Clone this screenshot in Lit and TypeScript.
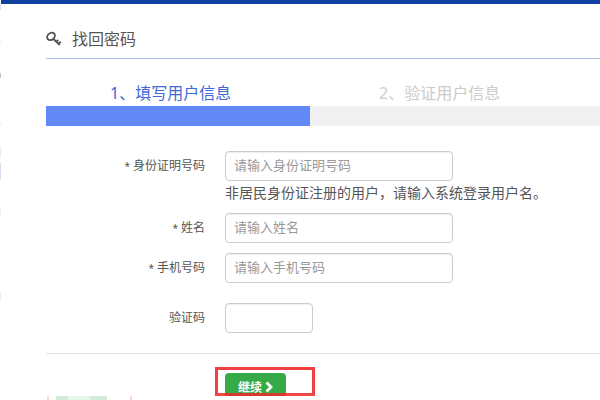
import { LitElement, html, css, nothing } from "lit";
import { customElement, property } from "lit/decorators.js";

@customElement("form-row")
class FormRow extends LitElement {
  @property() label = "";
  @property() placeholder = "";
  @property() hint = "";
  @property({ type: Boolean }) required = false;
  @property({ type: Boolean }) short = false;

  static styles = css`
    :host {
      display: grid;
      grid-template-columns: 159px minmax(0, 1fr);
      column-gap: 20px;
      color: #555;
    }
    .label {
      font-size: 12px;
      line-height: 30px;
      text-align: right;
    }
    .star {
      margin-right: 3px;
      font-size: 10px;
    }
    .input {
      display: block;
      box-sizing: border-box;
      width: 228px;
      max-width: 100%;
      height: 30px;
      padding: 0 8px 2px;
      border: 1px solid #ccc;
      border-radius: 4px;
      background: #fff;
      box-shadow: inset 0 1px 1px rgba(0, 0, 0, 0.07);
      color: #555;
      font: inherit;
      font-size: 13px;
    }
    .short {
      width: 88px;
    }
    .input::placeholder {
      color: #999;
      opacity: 1;
    }
    .hint {
      margin: 0;
      padding-top: 2px;
      font-size: 14px;
      line-height: 20px;
    }
  `;

  render() {
    return html`
      <label class="label" for="field"
        >${this.required ? html`<span class="star">*</span>` : nothing}${this.label}</label
      >
      <div>
        <input
          id="field"
          type="text"
          class="input ${this.short ? "short" : ""}"
          placeholder=${this.placeholder || nothing}
          ?required=${this.required}
        />
        ${this.hint ? html`<p class="hint">${this.hint}</p>` : nothing}
      </div>
    `;
  }
}

@customElement("app-root")
class AppRoot extends LitElement {
  static styles = css`
    :host {
      display: block;
      position: relative;
      height: 100vh;
      overflow: hidden;
      background: #fff;
      font-family: "Noto Sans", "Noto Sans CJK SC", sans-serif;
      color: #555;
    }
    .top {
      height: 4px;
      margin-left: 1px;
      background: #0f409f;
    }
    .edge {
      position: absolute;
      left: 0;
      top: 0;
      width: 1px;
      height: 100%;
      background: linear-gradient(
        #fff 4px,
        #dcdfec 4px 10px,
        #fff 10px 41px,
        #ececf2 41px 43px,
        #fff 43px 73px,
        #c4c4cc 73px 78px,
        #fff 78px 122px,
        #f2f2f5 122px 125px,
        #fff 125px 147px,
        #ececf4 147px 158px,
        #fff 158px 163px,
        #dadded 163px 180px,
        #fff 180px 207px,
        #eeeef2 207px 216px,
        #fff 216px 292px,
        #eeeef0 292px 301px,
        #fff 301px
      );
    }
    .page {
      padding-left: 46px;
    }
    .title {
      display: flex;
      align-items: center;
      gap: 10px;
      box-sizing: border-box;
      height: 55px;
      padding-top: 16px;
      border-bottom: 1px solid #a9c1e8;
    }
    .title h1 {
      margin: 0;
      font-size: 16px;
      line-height: 24px;
      font-weight: 400;
    }
    .key {
      width: 16px;
      height: 16px;
    }
    .steps {
      display: grid;
      grid-template-columns: 264px minmax(0, 1fr);
      margin: 0;
      padding: 21px 0 0;
      list-style: none;
      font-size: 16px;
      line-height: 26px;
    }
    .step {
      padding-left: 69px;
      color: #ccc;
      white-space: nowrap;
    }
    .current {
      padding-left: 64px;
      color: #4169d6;
    }
    .track {
      height: 20px;
      background: #f0f0f0;
    }
    .fill {
      width: 264px;
      height: 20px;
      background: #6188f6;
    }
    .fields {
      display: flex;
      flex-direction: column;
      gap: 10px;
      padding: 25px 0 20px;
      border-bottom: 1px solid #e2e2e2;
    }
    .code {
      margin-top: 10px;
    }
    .actions {
      position: relative;
      height: 42px;
      padding: 19px 0 0 179px;
      box-sizing: border-box;
      overflow: hidden;
    }
    .submit {
      display: flex;
      align-items: center;
      justify-content: center;
      gap: 3px;
      width: 61px;
      height: 28px;
      padding: 0;
      border: 0;
      border-radius: 4px;
      background: #35aa47;
      color: #fff;
      font: inherit;
      font-size: 12px;
      font-weight: 700;
    }
    .chevron {
      width: 8px;
      height: 12px;
    }
    .marker {
      position: absolute;
      left: 169px;
      top: 13px;
      box-sizing: border-box;
      width: 100px;
      height: 29px;
      border: 3px solid #f04040;
      border-bottom-color: rgba(240, 40, 40, 0.85);
      pointer-events: none;
    }
    .ghost {
      box-sizing: border-box;
      width: 85px;
      height: 4px;
      margin-left: 1px;
      border: solid #f9d5da;
      border-width: 0 2px;
      padding-left: 7px;
    }
    .ghost-fill {
      width: 51px;
      height: 4px;
      background: linear-gradient(90deg, #d3ecd7 12px, #e8f5e9 12px 34px, #d3ecd7 34px);
    }
  `;

  render() {
    return html`
      <div class="edge"></div>
      <div class="top"></div>
      <main class="page">
        <header class="title">
          <svg class="key" viewBox="0 0 16 16" fill="none" stroke="#555" aria-hidden="true">
            <ellipse cx="5" cy="5.4" rx="4.2" ry="3.3" transform="rotate(-40 5 5.4)" stroke-width="1.9" />
            <path d="M7.2 7.8 13.8 14M10.3 10.8 12.3 8.8M12.6 12.8 14.8 10.8" stroke-width="1.9" />
          </svg>
          <h1>找回密码</h1>
        </header>
        <ol class="steps">
          <li class="step current" aria-current="step">1、填写用户信息</li>
          <li class="step">2、验证用户信息</li>
        </ol>
        <div class="track"><div class="fill"></div></div>
        <form @submit=${(e: Event) => e.preventDefault()}>
          <div class="fields">
            <form-row
              label="身份证明号码"
              placeholder="请输入身份证明号码"
              hint="非居民身份证注册的用户，请输入系统登录用户名。"
              required
            ></form-row>
            <form-row label="姓名" placeholder="请输入姓名" required></form-row>
            <form-row label="手机号码" placeholder="请输入手机号码" required></form-row>
            <form-row class="code" label="验证码" short></form-row>
          </div>
          <div class="actions">
            <button class="submit" type="submit">
              继续
              <svg class="chevron" viewBox="0 0 8 12" fill="none" stroke="#fff" stroke-width="2.8" aria-hidden="true">
                <path d="M1.5 1.5 6 6 1.5 10.5" />
              </svg>
            </button>
            <div class="marker"></div>
          </div>
        </form>
        <div class="ghost"><div class="ghost-fill"></div></div>
      </main>
    `;
  }
}
